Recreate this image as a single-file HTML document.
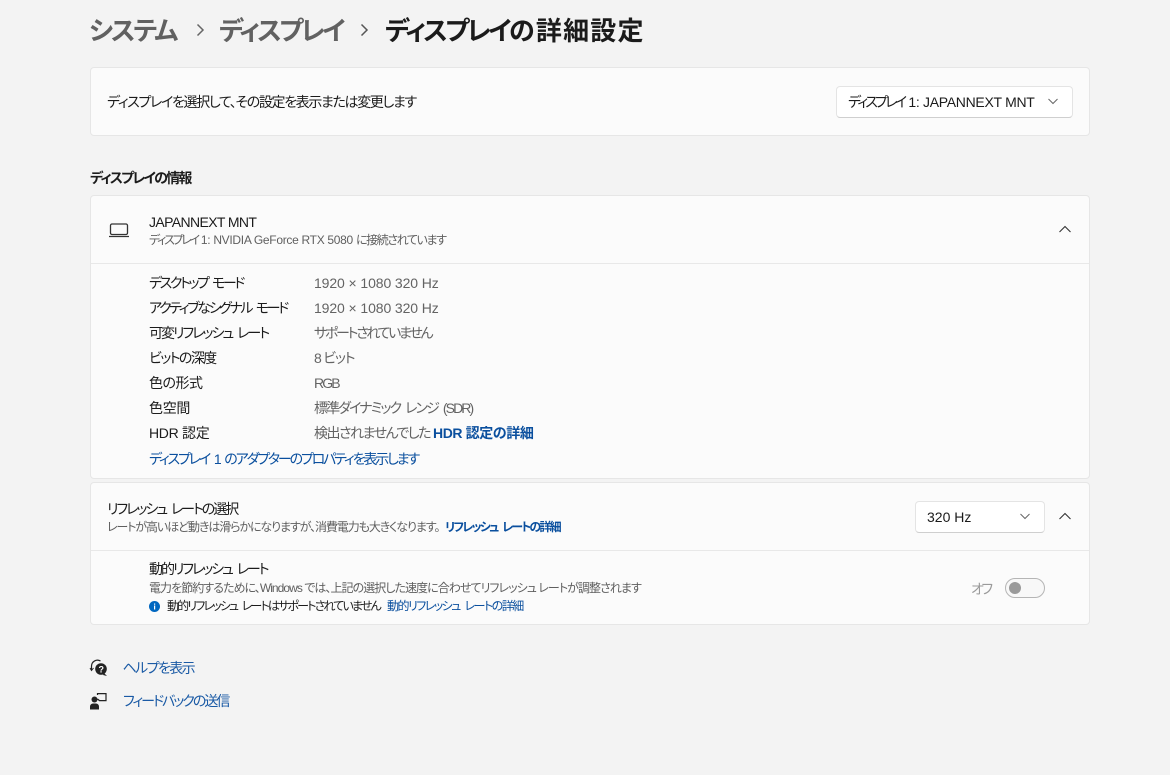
<!DOCTYPE html>
<html lang="ja"><head><meta charset="utf-8">
<style>
html,body{margin:0;padding:0;width:1170px;height:775px;overflow:hidden;background:#f3f3f3}
body{position:relative;font-family:"Liberation Sans","Noto Sans CJK JP",sans-serif;font-feature-settings:"palt";color:#1b1b1b}
.t{position:absolute;white-space:nowrap;font-size:14px;line-height:20px;height:20px}
.s{font-size:12px;line-height:16px;height:16px;color:#5f5f5f}
.g{color:#636363}
.l{color:#0a4f9e}
.w{word-spacing:3px}
.c{position:absolute;left:90px;width:998px;background:#fbfbfb;border:1px solid #e6e6e6;border-radius:4px;box-sizing:content-box}
.h{position:absolute;height:1px;background:#e8e8e8;left:91px;width:998px}
.d{position:absolute;background:#fff;border:1px solid #e4e4e4;border-bottom-color:#cfcfcf;border-radius:4px}
.tt{top:13px;font-size:26px;line-height:36px;height:36px;font-weight:700}
svg{position:absolute;overflow:visible}
</style></head><body>
<div class="t tt" style="left:89px;color:#616161;letter-spacing:-2.1px">システム</div>
<div class="t tt" style="left:219px;color:#616161;letter-spacing:-2.6px">ディスプレイ</div>
<div class="t tt" style="left:385px;color:#1b1b1b;letter-spacing:-2.6px">ディスプレイ<span style="letter-spacing:1.2px">の詳細設定</span></div>
<svg style="left:196px;top:24px" width="9" height="12" fill="none" stroke="#666" stroke-width="1.500"><path d="M1.500.5l5.500 5.500-5.500 5.500"/></svg>
<svg style="left:360px;top:24px" width="9" height="12" fill="none" stroke="#555" stroke-width="1.500"><path d="M1.500.5l5.500 5.500-5.500 5.500"/></svg>

<div class="c" style="top:67px;height:67px"></div>
<div class="t" style="left:107px;top:92px;letter-spacing:-1.35px">ディスプレイを選択して、その設定を表示または変更します</div>
<div class="d" style="left:836px;top:86px;width:235px;height:30px"></div>
<div class="t" style="left:848px;top:92px;letter-spacing:-.3px"><span class="w" style="letter-spacing:-2.8px">ディスプレイ </span>1: JAPANNEXT MNT</div>
<svg style="left:1048px;top:98px" width="10" height="7" fill="none" stroke="#666"><path d="M.5 1l4.500 4.500L9.500 1"/></svg>

<div class="t" style="left:90px;top:168px;font-weight:700;letter-spacing:-1.83px">ディスプレイの情報</div>

<div class="c" style="top:195px;height:282px"></div>
<div class="h" style="top:263px"></div>
<svg style="left:109px;top:223px" width="20" height="15" fill="none" stroke="#333" stroke-width="1.300"><rect x="1.500" y="1" width="17" height="10.500" rx="1.500"/><path d="M0 13.500h20"/></svg>
<div class="t" style="left:149px;top:212px;letter-spacing:-.62px">JAPANNEXT MNT</div>
<div class="t s" style="left:149px;top:232px;letter-spacing:-.3px"><span style="letter-spacing:-2.3px;word-spacing:2px">ディスプレイ </span>1: NVIDIA GeForce RTX 5080 <span style="letter-spacing:-1.4px">に接続されています</span></div>
<svg style="left:1059px;top:225px" width="12" height="8" fill="none" stroke="#333" stroke-width="1.100"><path d="M.5 7L6 1.500 11.500 7"/></svg>

<div class="t w" style="left:149px;top:273px;letter-spacing:-2.4px">デスクトップ モード</div>
<div class="t g" style="left:314px;top:273px;letter-spacing:-.1px">1920 × 1080 320 Hz</div>
<div class="t w" style="left:149px;top:298px;letter-spacing:-2.35px">アクティブなシグナル モード</div>
<div class="t g" style="left:314px;top:298px;letter-spacing:-.1px">1920 × 1080 320 Hz</div>
<div class="t w" style="left:149px;top:323px;letter-spacing:-2px">可変リフレッシュ レート</div>
<div class="t g" style="left:314px;top:323px;letter-spacing:-2.3px">サポートされていません</div>
<div class="t" style="left:149px;top:348px;letter-spacing:-1.6px">ビットの深度</div>
<div class="t g" style="left:314px;top:348px;letter-spacing:-1.2px">8 ビット</div>
<div class="t" style="left:149px;top:373px;letter-spacing:-.5px">色の形式</div>
<div class="t g" style="left:314px;top:373px;letter-spacing:-1.9px">RGB</div>
<div class="t" style="left:149px;top:398px;letter-spacing:-.3px">色空間</div>
<div class="t g w" style="left:314px;top:398px;letter-spacing:-1.9px">標準ダイナミック レンジ (SDR)</div>
<div class="t" style="left:149px;top:423px;letter-spacing:-.3px">HDR 認定</div>
<div class="t g" style="left:314px;top:423px;letter-spacing:-1.5px">検出されませんでした</div>
<div class="t l" style="left:433px;top:423px;font-weight:700;letter-spacing:-.4px">HDR 認定の詳細</div>
<div class="t l w" style="left:149px;top:449px;letter-spacing:-2.15px">ディスプレイ 1 のアダプターのプロパティを表示します</div>

<div class="c" style="top:482px;height:141px"></div>
<div class="h" style="top:550px"></div>
<div class="t w" style="left:107px;top:499px;letter-spacing:-2.03px">リフレッシュ レートの選択</div>
<div class="t s" style="left:107px;top:519px;letter-spacing:-1.1px">レートが高いほど動きは滑らかになりますが、消費電力も大きくなります。</div>
<div class="t s l w" style="left:445px;top:519px;font-weight:700;letter-spacing:-1.83px">リフレッシュ レートの詳細</div>
<div class="d" style="left:915px;top:501px;width:128px;height:30px"></div>
<div class="t" style="left:927px;top:507px">320 Hz</div>
<svg style="left:1020px;top:513px" width="10" height="7" fill="none" stroke="#666"><path d="M.5 1l4.500 4.500L9.500 1"/></svg>
<svg style="left:1059px;top:512px" width="12" height="8" fill="none" stroke="#333" stroke-width="1.100"><path d="M.5 7L6 1.500 11.500 7"/></svg>

<div class="t w" style="left:149px;top:559px;letter-spacing:-2.05px">動的リフレッシュ レート</div>
<div class="t s" style="left:149px;top:580px;letter-spacing:-.95px">電力を節約するために、Windows では、上記の選択した速度に合わせてリフレッシュ レートが調整されます</div>
<svg style="left:149px;top:601px" width="11" height="11"><circle cx="5.500" cy="5.500" r="5.500" fill="#0067c0"/><rect x="5" y="4.500" width="1.200" height="4" fill="#fff"/><rect x="5" y="2.500" width="1.200" height="1.200" fill="#fff"/></svg>
<div class="t s w" style="left:167px;top:598px;color:#1b1b1b;letter-spacing:-1.85px">動的リフレッシュ レートはサポートされていません</div>
<div class="t s l w" style="left:387px;top:598px;letter-spacing:-1.53px">動的リフレッシュ レートの詳細</div>
<div class="t" style="left:971px;top:579px;color:#9a9a9a;letter-spacing:-2.5px">オフ</div>
<div style="position:absolute;left:1005px;top:578px;width:38px;height:18px;border:1px solid #b5b5b5;border-radius:10px;background:#f8f8f8"></div>
<div style="position:absolute;left:1009px;top:582px;width:12px;height:12px;border-radius:50%;background:#9a9a9a"></div>

<svg style="left:90px;top:659px" width="18" height="18" fill="none"><path d="M1.500 11V7a6 6 0 0 1 9-5" stroke="#222" stroke-width="1.200"/><path d="M0 9l1.500 2.500L3.500 9" stroke="#222"/><circle cx="11" cy="10" r="5.800" fill="#222"/><path d="M14 14l3 3-4-1z" fill="#222"/><text x="8.500" y="13.500" font-size="9" font-weight="700" fill="#fff" font-family="Liberation Sans">?</text></svg>
<div class="t l" style="left:122.500px;top:658px;letter-spacing:-1.6px;color:#1a5aa5">ヘルプを表示</div>
<svg style="left:90px;top:693px" width="18" height="18" fill="none"><circle cx="4.500" cy="6.500" r="3" fill="#222"/><path d="M0 16.500v-3a3 3 0 0 1 3-3h3a3 3 0 0 1 3 3v3z" fill="#222"/><path d="M7.500 2V.600h8.500v7H9.500L7.500 6" stroke="#222" stroke-width="1.200"/></svg>
<div class="t l" style="left:123px;top:691px;letter-spacing:-2px;color:#1a5aa5">フィードバックの送信</div>
</body></html>
